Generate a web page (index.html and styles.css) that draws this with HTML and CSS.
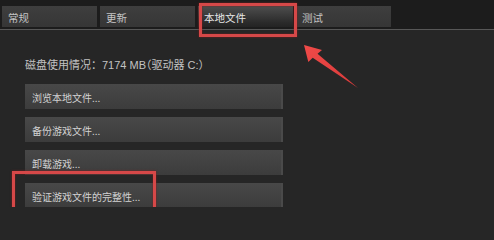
FILE: index.html
```html
<!DOCTYPE html>
<html lang="zh-CN">
<head>
<meta charset="utf-8">
<title>本地文件</title>
<link rel="stylesheet" href="styles.css">
</head>
<body>
<div class="window">
  <div class="tabbar">
    <div class="tab">常规</div>
    <div class="tab">更新</div>
    <div class="tab tab-active">本地文件</div>
    <div class="tab">测试</div>
  </div>
  <div class="content">
    <p class="disk">磁盘使用情况：7174 MB<span class="drive">（驱动器 C:）</span></p>
    <div class="actions">
      <div class="btn">浏览本地文件...</div>
      <div class="btn">备份游戏文件...</div>
      <div class="btn">卸载游戏...</div>
      <div class="btn">验证游戏文件的完整性...</div>
    </div>
  </div>
  <div class="mark mark-tab"></div>
  <div class="mark mark-btn"></div>
  <svg class="arrow" width="494" height="207" viewBox="0 0 494 207">
    <defs>
      <linearGradient id="ag" x1="0" y1="0" x2="1" y2="1">
        <stop offset="0" stop-color="#f04a48"/>
        <stop offset="1" stop-color="#d83a3a"/>
      </linearGradient>
    </defs>
    <polygon points="304,45 322,50 317.5,53.8 358,88 312.7,57.8 308.3,62" fill="url(#ag)"/>
  </svg>
</div>
</body>
</html>
```

FILE: styles.css
```css
html, body {
  margin: 0;
  padding: 0;
  background: #262626;
}
body {
  width: 494px;
  height: 207px;
  overflow: hidden;
  font-family: "Noto Sans CJK TC", "Noto Sans CJK SC", sans-serif;
  color: #c8c8c8;
}
.window {
  position: relative;
  width: 494px;
  height: 207px;
  background: #262626;
}
.tabbar {
  display: flex;
  gap: 3px;
  padding: 6px 0 2px 2px;
  background: #1c1c1c;
  border-bottom: 1px solid #575757;
}
.tab {
  width: 95px;
  height: 21px;
  box-sizing: border-box;
  padding-left: 6px;
  font-size: 10.5px;
  line-height: 23px;
  color: #c4c4c4;
  background: linear-gradient(#3e3e3e, #363636);
}
.tab-active {
  color: #e6e6e6;
  background: linear-gradient(#4e4e4e, #2a2a2a 80%, #242424);
}
.content {
  padding: 28px 0 0 25px;
}
.disk {
  margin: 0 0 12px 0;
  font-family: "Liberation Sans", "Noto Sans CJK TC", sans-serif;
  font-size: 11px;
  line-height: 14px;
  color: #c2c2c2;
}
.drive {
  font-feature-settings: "halt";
}
.actions {
  display: flex;
  flex-direction: column;
  gap: 8px;
  width: 258px;
}
.btn {
  height: 25px;
  box-sizing: border-box;
  padding: 2px 0 0 7px;
  font-size: 10px;
  line-height: 23px;
  color: #d2d2d2;
  background: linear-gradient(#484848, #3c3c3c);
  border-right: 2px solid #4a4a4a;
}
.mark {
  position: absolute;
  box-sizing: border-box;
  border: 3px solid #d64848;
  box-shadow: inset 0 0 2px #7a1d1d, 0 0 2px #7a1d1d;
}
.mark-tab {
  left: 199px;
  top: 3px;
  width: 98px;
  height: 34px;
}
.mark-btn {
  left: 12px;
  top: 171px;
  width: 144px;
  height: 44px;
}
.arrow {
  position: absolute;
  left: 0;
  top: 0;
}
```
